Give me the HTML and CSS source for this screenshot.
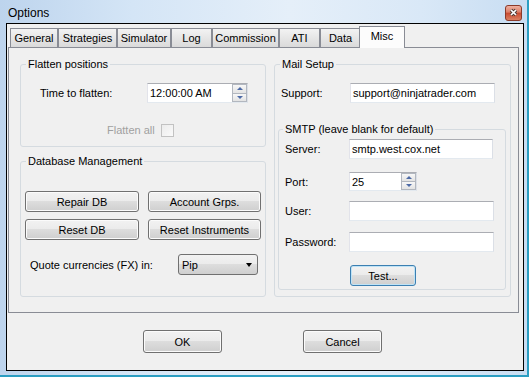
FILE: index.html
```html
<!DOCTYPE html>
<html>
<head>
    <title>Options</title>
    <link rel="stylesheet" href="styles.css">
</head>
<body>
    <div class="window">
        <header class="title-bar">
            <span class="title">Options</span>
            <button class="close-btn" aria-label="Close">
                <svg width="17" height="16" viewBox="0 0 17 16">
                    <defs>
                        <linearGradient id="closeFill" x1="0" y1="0" x2="0" y2="1">
                            <stop offset="0" stop-color="#f0b5a6"/>
                            <stop offset="0.45" stop-color="#dc7d66"/>
                            <stop offset="0.5" stop-color="#c8492f"/>
                            <stop offset="1" stop-color="#dc8465"/>
                        </linearGradient>
                    </defs>
                    <rect x="0.5" y="0.5" width="16" height="15" rx="2.5" fill="url(#closeFill)" stroke="#8a3a2a"/>
                    <path d="M6 5 L11 10 M11 5 L6 10" stroke="#4a3a36" stroke-width="3.4"/>
                    <path d="M6 5 L11 10 M11 5 L6 10" stroke="#ffffff" stroke-width="1.7"/>
                </svg>
            </button>
        </header>
        <div class="client">
            <nav class="tabs">
                <span class="tab">General</span>
                <span class="tab">Strategies</span>
                <span class="tab">Simulator</span>
                <span class="tab">Log</span>
                <span class="tab">Commission</span>
                <span class="tab">ATI</span>
                <span class="tab">Data</span>
                <span class="tab active">Misc</span>
            </nav>
            <div class="tab-page">
                <div class="column left-column">
                    <fieldset class="group">
                        <legend>Flatten positions</legend>
                        <div class="group-body flatten-body">
                            <div class="field-row">
                                <label class="flatten-label">Time to flatten:</label>
                                <div class="spin time-spin">
                                    <input class="spin-input" type="text" value="12:00:00 AM">
                                    <span class="spin-buttons"><span class="spin-up"></span><span class="spin-down"></span></span>
                                </div>
                            </div>
                            <div class="check-row">
                                <span class="disabled-text">Flatten all</span>
                                <span class="checkbox"></span>
                            </div>
                        </div>
                    </fieldset>
                    <fieldset class="group db-group">
                        <legend>Database Management</legend>
                        <div class="group-body db-body">
                            <div class="db-buttons">
                                <button class="btn">Repair DB</button>
                                <button class="btn">Account Grps.</button>
                                <button class="btn">Reset DB</button>
                                <button class="btn">Reset Instruments</button>
                            </div>
                            <div class="field-row quote-row">
                                <label class="quote-label">Quote currencies (FX) in:</label>
                                <div class="combo"><span>Pip</span><span class="combo-arrow"></span></div>
                            </div>
                        </div>
                    </fieldset>
                </div>
                <div class="column right-column">
                    <fieldset class="group">
                        <legend>Mail Setup</legend>
                        <div class="group-body mail-body">
                            <div class="field-row support-row">
                                <label class="support-label">Support:</label>
                                <input class="text-box support-box" type="text" value="support@ninjatrader.com">
                            </div>
                            <fieldset class="group smtp-group">
                                <legend>SMTP (leave blank for default)</legend>
                                <div class="group-body smtp-body">
                                    <div class="field-row">
                                        <label class="smtp-label">Server:</label>
                                        <input class="text-box server-box" type="text" value="smtp.west.cox.net">
                                    </div>
                                    <div class="field-row port-row">
                                        <label class="smtp-label">Port:</label>
                                        <div class="spin port-spin">
                                            <input class="spin-input" type="text" value="25">
                                            <span class="spin-buttons"><span class="spin-up"></span><span class="spin-down"></span></span>
                                        </div>
                                    </div>
                                    <div class="field-row user-row">
                                        <label class="smtp-label">User:</label>
                                        <input class="text-box wide-box" type="text">
                                    </div>
                                    <div class="field-row password-row">
                                        <label class="smtp-label">Password:</label>
                                        <input class="text-box wide-box" type="password">
                                    </div>
                                    <button class="btn test-btn">Test...</button>
                                </div>
                            </fieldset>
                        </div>
                    </fieldset>
                </div>
            </div>
            <div class="dialog-buttons">
                <button class="btn dialog-btn">OK</button>
                <button class="btn dialog-btn">Cancel</button>
            </div>
        </div>
    </div>
</body>
</html>
```

FILE: styles.css
```css
body {
    margin: 0;
    font-family: "Liberation Sans", Arial, sans-serif;
    font-size: 11px;
    color: #000;
    background: #ffffff;
}

.window {
    width: 529px;
    height: 377px;
    box-sizing: border-box;
    display: flex;
    flex-direction: column;
    background: linear-gradient(90deg, #bdd4ed 0%, #d4e5f6 25%, #e5eff9 55%, #d9e8f7 80%, #c8ddf2 100%);
    border-right: 2px solid #2b9ec2;
    border-bottom: 2px solid #2b9ec2;
}

.title-bar {
    height: 23px;
    box-sizing: border-box;
    display: flex;
    justify-content: space-between;
    align-items: flex-start;
    padding: 5px 5px 0 8px;
}

.title {
    font-size: 12px;
    line-height: 16px;
}

.close-btn {
    width: 17px;
    height: 16px;
    padding: 0;
    border: none;
    background: none;
    display: block;
}

.close-btn svg {
    display: block;
}

.client {
    flex: 1;
    margin: 0 3px 4px 6px;
    border: 1px solid #000;
    background: #f0f0f0;
    display: flex;
    flex-direction: column;
}

/* tabs */
.tabs {
    display: flex;
    align-items: flex-end;
    height: 21px;
    margin: 2px 0 0 3px;
}

.tab {
    height: 19px;
    box-sizing: border-box;
    flex: none;
    padding: 0;
    display: flex;
    align-items: center;
    justify-content: center;
    border: 1px solid #898c95;
    border-bottom: none;
    background: linear-gradient(#f3f3f3, #e6e6e6 50%, #dadada);
    white-space: nowrap;
}

.tab:nth-child(1) { width: 48px; }
.tab:nth-child(2) { width: 59px; }
.tab:nth-child(3) { width: 54px; }
.tab:nth-child(4) { width: 41px; }
.tab:nth-child(5) { width: 67px; }
.tab:nth-child(6) { width: 41px; }
.tab:nth-child(7) { width: 41px; }

.tab.active {
    width: 46px;
    height: 22px;
    margin: 0 -2px -1px -2px;
    padding: 0 0 3px;
    position: relative;
    z-index: 1;
    background: #fcfcfc;
}

.tab-page {
    height: 266px;
    box-sizing: border-box;
    margin: 0 4px 0 1px;
    border: 1px solid #898c95;
    background: #f0f0f0;
    display: flex;
    gap: 8px;
    padding: 10px 7px 0 11px;
}

.column {
    display: flex;
    flex-direction: column;
    flex: none;
}

.left-column {
    width: 246px;
}

.right-column {
    width: 237px;
}

/* group boxes */
.group {
    margin: 0;
    padding: 0;
    min-width: 0;
    border: 1px solid #d5dbe0;
    border-radius: 3px;
}

.group legend {
    margin-left: 5px;
    padding: 0 2px;
    line-height: 13px;
}

.smtp-group legend {
    margin-left: 4px;
}

.field-row {
    display: flex;
    align-items: center;
}

.flatten-body {
    padding: 12px 0 9px 19px;
}

.flatten-label {
    width: 107px;
}

.check-row {
    display: flex;
    align-items: center;
    gap: 6px;
    margin-top: 21px;
    padding-left: 67px;
}

.disabled-text {
    color: #a0a0a0;
    line-height: 13px;
}

.checkbox {
    width: 13px;
    height: 13px;
    box-sizing: border-box;
    border: 1px solid #c2c2c2;
    background: linear-gradient(135deg, #ececec, #fafafa);
}

.db-group {
    margin-top: 8px;
}

.db-body {
    padding: 23px 4px 21px 4px;
}

.db-buttons {
    display: grid;
    grid-template-columns: 114px 113px;
    column-gap: 9px;
    row-gap: 7px;
}

.quote-row {
    margin-top: 14px;
    padding-left: 5px;
}

.quote-label {
    width: 148px;
}

.mail-body {
    padding: 12px 4px 6px 3px;
}

.support-row {
    padding-left: 3px;
}

.support-label {
    width: 69px;
}

.smtp-group {
    margin-top: 20px;
}

.smtp-body {
    padding: 3px 0 3px 6px;
}

.smtp-label {
    width: 64px;
}

.port-row {
    margin-top: 13px;
}

.user-row {
    margin-top: 10px;
}

.password-row {
    margin-top: 11px;
}

/* controls */
.text-box {
    box-sizing: border-box;
    height: 20px;
    margin: 0;
    padding: 0 2px;
    border: 1px solid;
    border-color: #abadb3 #dbdfe6 #e3e9ef #e2e3ea;
    background: #fff;
    font: inherit;
    color: #000;
    outline: none;
}

.support-box {
    width: 145px;
}

.server-box {
    width: 144px;
}

.wide-box {
    width: 145px;
}

.spin {
    box-sizing: border-box;
    display: flex;
    height: 20px;
    border: 1px solid;
    border-color: #abadb3 #dbdfe6 #e3e9ef #e2e3ea;
    background: #fff;
}

.time-spin {
    width: 101px;
}

.port-spin {
    width: 68px;
    height: 19px;
}

.spin-input {
    flex: 1;
    min-width: 0;
    margin: 0;
    padding: 0 2px;
    border: none;
    background: transparent;
    font: inherit;
    color: #000;
    outline: none;
}

.spin-buttons {
    display: flex;
    flex-direction: column;
    width: 15px;
}

.spin-up,
.spin-down {
    flex: 1;
    display: flex;
    align-items: center;
    justify-content: center;
    border: 1px solid #b2b7bf;
    background: linear-gradient(#f7f7f7, #e3e3e3);
}

.spin-up {
    border-bottom: none;
}

.spin-up::after {
    content: "";
    border-left: 3px solid transparent;
    border-right: 3px solid transparent;
    border-bottom: 3px solid #4d6aa6;
}

.spin-down::after {
    content: "";
    border-left: 3px solid transparent;
    border-right: 3px solid transparent;
    border-top: 3px solid #4d6aa6;
}

.btn {
    box-sizing: border-box;
    height: 21px;
    margin: 0;
    padding: 0;
    font: inherit;
    color: #000;
    border: 1px solid #707070;
    border-radius: 3px;
    background: linear-gradient(#f2f2f2 0%, #ebebeb 49%, #dddddd 50%, #cfcfcf 100%);
    box-shadow: inset 0 0 0 1px #fbfbfb;
}

.test-btn {
    display: block;
    width: 66px;
    margin-top: 13px;
    margin-left: 65px;
    border-color: #3c7fb1;
    box-shadow: inset 0 0 0 1px #bfe3f6;
}

.combo {
    box-sizing: border-box;
    width: 80px;
    height: 21px;
    display: flex;
    align-items: center;
    justify-content: space-between;
    padding: 0 5px 0 3px;
    border: 1px solid #707070;
    border-radius: 3px;
    background: linear-gradient(#f2f2f2 0%, #ebebeb 49%, #dddddd 50%, #cfcfcf 100%);
}

.combo-arrow {
    width: 0;
    height: 0;
    border-left: 3.5px solid transparent;
    border-right: 3.5px solid transparent;
    border-top: 4px solid #000;
}

.dialog-buttons {
    display: flex;
    gap: 81px;
    margin-top: 17px;
    padding-left: 136px;
}

.dialog-btn {
    width: 79px;
    height: 23px;
}
```
